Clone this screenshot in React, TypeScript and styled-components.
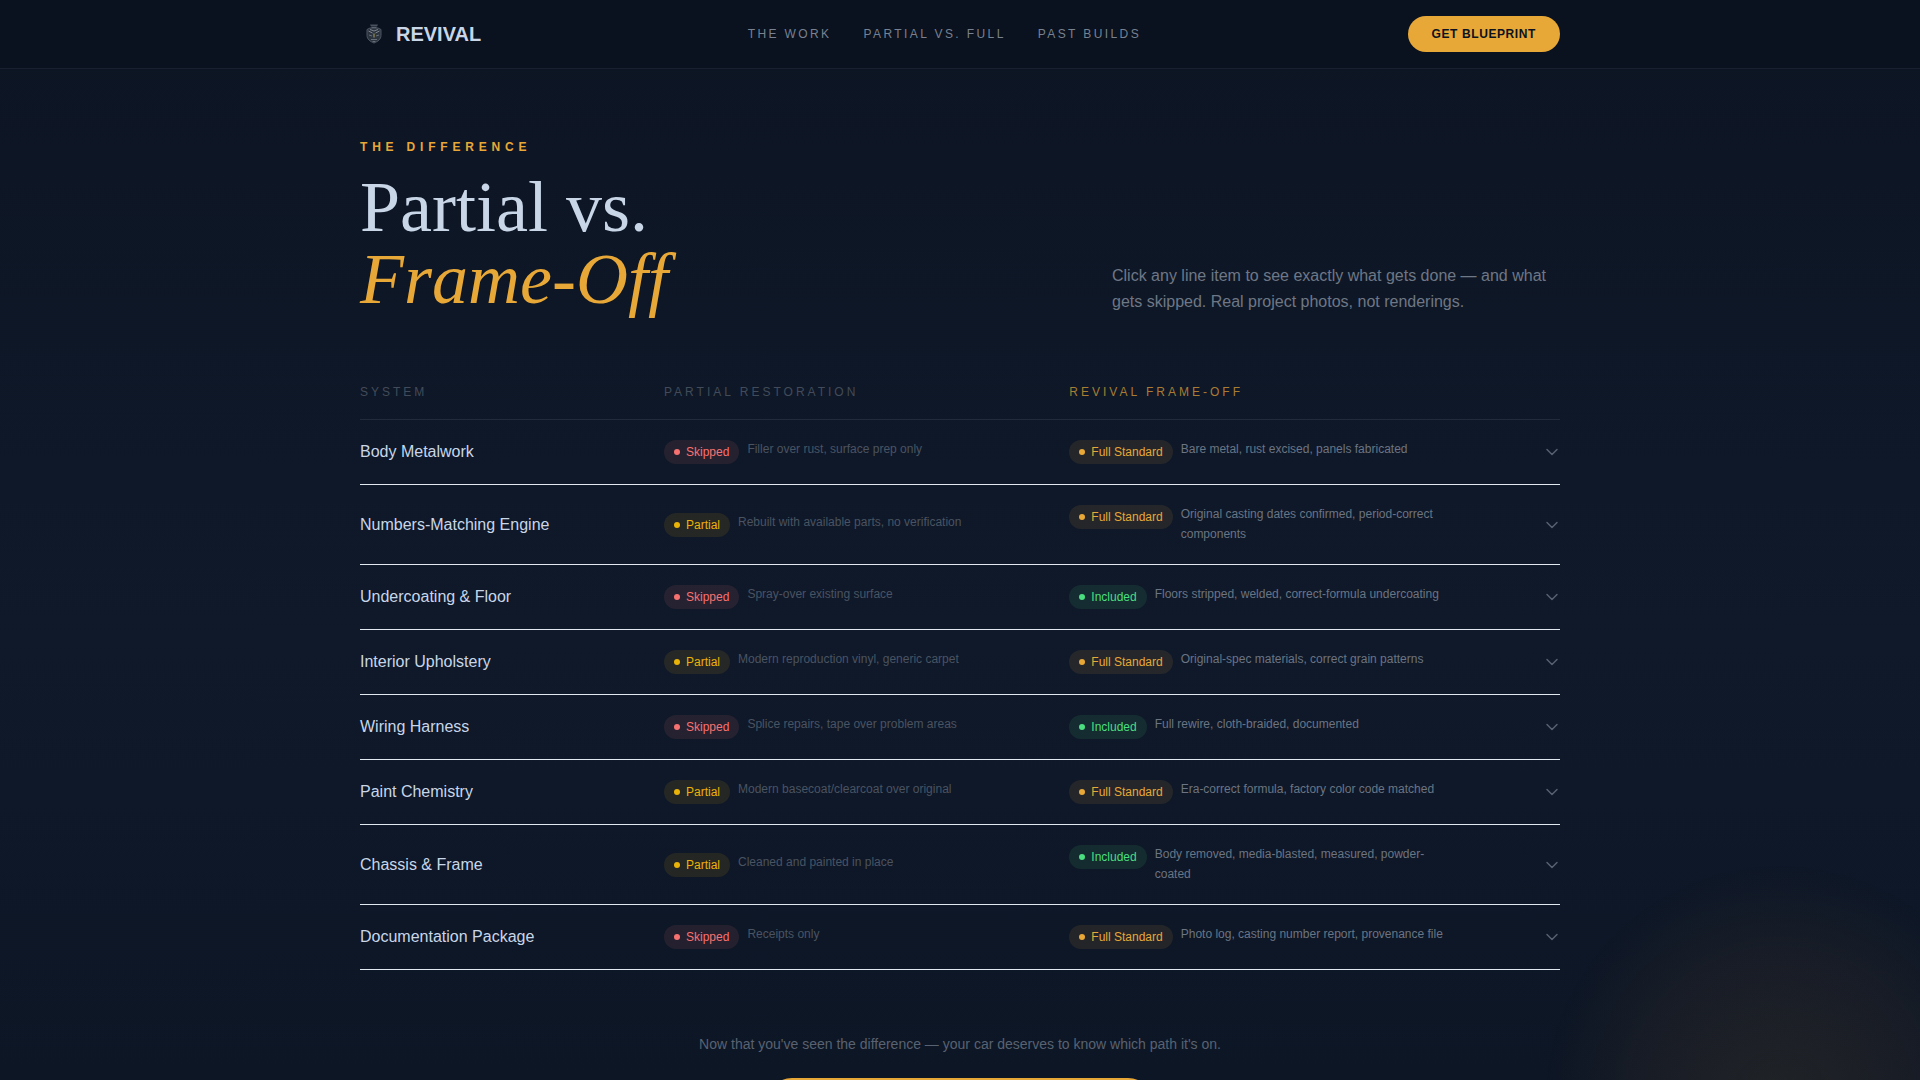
import React, { useState } from "react";
import styled, { createGlobalStyle } from "styled-components";

const sans = `"Liberation Sans", Arial, sans-serif`;
const serif = `"Liberation Serif", "Times New Roman", serif`;
const amber = "#e8a838";
const ice = "#c8d6e8";

const GlobalStyle = createGlobalStyle`
  *, *::before, *::after { box-sizing: border-box; }
  html { background: #0e1726; }
  body {
    margin: 0;
    font-family: ${sans};
    color: ${ice};
    line-height: 1.5;
  }
  h1, h2, p { margin: 0; }
  button { font: inherit; color: inherit; border: 0; background: none; cursor: pointer; }
`;

const Page = styled.div`
  position: relative;
  min-height: 100vh;
  background: linear-gradient(180deg, #0d1523 0, #0f192a 640px, #0d1625 1080px);
`;

const Glow = styled.div`
  position: fixed;
  right: -100px;
  bottom: -260px;
  width: 480px;
  height: 480px;
  border-radius: 50%;
  background: radial-gradient(circle, rgba(232, 168, 56, 0.09), rgba(232, 150, 56, 0.05) 42%, transparent 70%);
  pointer-events: none;
`;

const Container = styled.div`
  width: 100%;
  max-width: 1200px;
  margin: 0 auto;
`;

const TopBar = styled.header`
  background: #0a111f;
  border-bottom: 1px solid #19202f;
`;

const TopBarInner = styled(Container)`
  display: flex;
  align-items: center;
  justify-content: space-between;
  padding: 16px 0;
`;

const Brand = styled.a`
  display: flex;
  align-items: center;
  gap: 8px;
  color: ${ice};
  text-decoration: none;
  font-size: 20px;
  line-height: 28px;
  font-weight: 700;
`;

const Nav = styled.nav`
  display: flex;
  gap: 32px;
`;

const NavLink = styled.a`
  color: #78818f;
  text-decoration: none;
  font-size: 12px;
  line-height: 16px;
  letter-spacing: 0.2em;
  text-transform: uppercase;
`;

const Pill = styled.button<{ $large?: boolean }>`
  padding: ${(p) => (p.$large ? "16px 40px" : "10px 24px")};
  min-width: ${(p) => (p.$large ? "388px" : "0")};
  border-radius: 999px;
  background: ${amber};
  color: #0b1220;
  font-size: ${(p) => (p.$large ? "14px" : "12px")};
  line-height: ${(p) => (p.$large ? "20px" : "16px")};
  font-weight: 700;
  letter-spacing: 0.05em;
  text-transform: uppercase;
`;

const Section = styled(Container).attrs({ as: "main" })`
  padding: 70px 0 96px;
`;

const Intro = styled.div`
  display: flex;
  align-items: flex-end;
  justify-content: space-between;
  margin-bottom: 69px;
`;

const Eyebrow = styled.p`
  color: ${amber};
  font-size: 12px;
  line-height: 16px;
  font-weight: 700;
  letter-spacing: 0.4em;
  text-transform: uppercase;
  margin-bottom: 16px;
`;

const Title = styled.h1`
  font-family: ${serif};
  font-size: 72px;
  line-height: 72px;
  font-weight: 400;
  color: ${ice};

  em {
    display: block;
    color: ${amber};
  }
`;

const Lead = styled.p`
  width: 448px;
  color: #6e7785;
  font-size: 16px;
  line-height: 26px;
`;

const Grid = styled.div`
  display: grid;
  grid-template-columns: repeat(12, minmax(0, 1fr));
  column-gap: 16px;
`;

const HeadRow = styled(Grid)`
  padding-bottom: 19px;
  border-bottom: 1px solid #222b3a;
`;

const Heading = styled.div<{ $span: number; $accent?: boolean }>`
  grid-column: span ${(p) => p.$span};
  color: ${(p) => (p.$accent ? "#a87c33" : "#424b59")};
  font-size: 12px;
  line-height: 16px;
  letter-spacing: 0.25em;
  text-transform: uppercase;
`;

const Item = styled.div`
  border-bottom: 1px solid #e2e8f0;
`;

const RowButton = styled(Grid).attrs({ as: "button", type: "button" })`
  width: 100%;
  align-items: center;
  padding: 20px 0;
  text-align: left;
`;

const Name = styled.span`
  grid-column: span 3;
  font-size: 16px;
  line-height: 24px;
`;

const Cell = styled.span`
  grid-column: span 4;
  display: flex;
  align-items: flex-start;
  gap: 8px;
`;

type Status = "Skipped" | "Partial" | "Full Standard" | "Included";

const tone: Record<Status, { ink: string; fill: string }> = {
  Skipped: { ink: "#f87171", fill: "rgba(248, 113, 113, 0.1)" },
  Partial: { ink: "#eab308", fill: "rgba(234, 179, 8, 0.1)" },
  "Full Standard": { ink: amber, fill: "rgba(232, 168, 56, 0.1)" },
  Included: { ink: "#4ade80", fill: "rgba(74, 222, 128, 0.1)" },
};

const Badge = styled.span<{ $status: Status }>`
  display: inline-flex;
  align-items: center;
  flex-shrink: 0;
  gap: 6px;
  padding: 4px 10px;
  border-radius: 999px;
  font-size: 12px;
  line-height: 16px;
  color: ${(p) => tone[p.$status].ink};
  background: ${(p) => tone[p.$status].fill};

  &::before {
    content: "";
    width: 6px;
    height: 6px;
    border-radius: 50%;
    background: currentColor;
  }
`;

const Note = styled.span<{ $strong?: boolean }>`
  color: ${(p) => (p.$strong ? "#6b7482" : "#4a5361")};
  font-size: 12px;
  line-height: 1.625;
`;

const Toggle = styled.span<{ $open: boolean }>`
  display: flex;
  justify-content: flex-end;
  color: #566070;

  svg {
    transform: rotate(${(p) => (p.$open ? "180deg" : "0deg")});
  }
`;

const Closing = styled.div`
  display: flex;
  flex-direction: column;
  align-items: center;
  gap: 24px;
  padding-top: 64px;
`;

const ClosingText = styled.p`
  color: #596271;
  font-size: 14px;
  line-height: 20px;
`;

interface System {
  name: string;
  partial: [Status, string];
  full: [Status, string];
}

const systems: System[] = [
  { name: "Body Metalwork", partial: ["Skipped", "Filler over rust, surface prep only"], full: ["Full Standard", "Bare metal, rust excised, panels fabricated"] },
  { name: "Numbers-Matching Engine", partial: ["Partial", "Rebuilt with available parts, no verification"], full: ["Full Standard", "Original casting dates confirmed, period-correct components"] },
  { name: "Undercoating & Floor", partial: ["Skipped", "Spray-over existing surface"], full: ["Included", "Floors stripped, welded, correct-formula undercoating"] },
  { name: "Interior Upholstery", partial: ["Partial", "Modern reproduction vinyl, generic carpet"], full: ["Full Standard", "Original-spec materials, correct grain patterns"] },
  { name: "Wiring Harness", partial: ["Skipped", "Splice repairs, tape over problem areas"], full: ["Included", "Full rewire, cloth-braided, documented"] },
  { name: "Paint Chemistry", partial: ["Partial", "Modern basecoat/clearcoat over original"], full: ["Full Standard", "Era-correct formula, factory color code matched"] },
  { name: "Chassis & Frame", partial: ["Partial", "Cleaned and painted in place"], full: ["Included", "Body removed, media-blasted, measured, powder-coated"] },
  { name: "Documentation Package", partial: ["Skipped", "Receipts only"], full: ["Full Standard", "Photo log, casting number report, provenance file"] },
];

const Crest = () => (
  <svg width="28" height="28" viewBox="0 0 28 28" fill="none" aria-hidden="true">
    <path d="M10 4.5h8l-1 2h-6z" fill="#4a525e" />
    <path d="M11.5 7.5h5" stroke="#6a717b" />
    <path d="M7 9.5l3-1.5h8l3 1.5v6c0 3.5-3 6-7 7.5-4-1.5-7-4-7-7.5z" fill="#2b333f" stroke="#4d5663" />
    <path d="M8.5 11l4 2M19.5 11l-4 2M10 9.5l4 1.5 4-1.5" stroke="#7d848d" />
    <path d="M9 15l3 1M19 15l-3 1M11 19.5h6M12.5 21.5h3" stroke="#666e79" />
    <path d="M13 13.5h2v4h-2z" fill="#6d6a4c" />
  </svg>
);

const Chevron = () => (
  <svg width="16" height="16" viewBox="0 0 16 16" fill="none" aria-hidden="true">
    <path d="M3 5.5l5 5 5-5" stroke="currentColor" strokeWidth="1.5" strokeLinecap="round" strokeLinejoin="round" />
  </svg>
);

function SystemRow({ system }: { system: System }) {
  const [open, setOpen] = useState(false);
  return (
    <Item>
      <RowButton aria-expanded={open} onClick={() => setOpen(!open)}>
        <Name>{system.name}</Name>
        <Cell>
          <Badge $status={system.partial[0]}>{system.partial[0]}</Badge>
          <Note>{system.partial[1]}</Note>
        </Cell>
        <Cell>
          <Badge $status={system.full[0]}>{system.full[0]}</Badge>
          <Note $strong>{system.full[1]}</Note>
        </Cell>
        <Toggle $open={open}>
          <Chevron />
        </Toggle>
      </RowButton>
    </Item>
  );
}

export default function App() {
  return (
    <Page>
      <GlobalStyle />
      <TopBar>
        <TopBarInner>
          <Brand href="#">
            <Crest />
            REVIVAL
          </Brand>
          <Nav>
            <NavLink href="#work">The Work</NavLink>
            <NavLink href="#difference">Partial vs. Full</NavLink>
            <NavLink href="#builds">Past Builds</NavLink>
          </Nav>
          <Pill type="button">Get Blueprint</Pill>
        </TopBarInner>
      </TopBar>
      <Section>
        <Intro>
          <div>
            <Eyebrow>The Difference</Eyebrow>
            <Title>
              Partial vs.
              <em>Frame-Off</em>
            </Title>
          </div>
          <Lead>
            Click any line item to see exactly what gets done — and what gets skipped. Real project photos, not
            renderings.
          </Lead>
        </Intro>
        <HeadRow>
          <Heading $span={3}>System</Heading>
          <Heading $span={4}>Partial Restoration</Heading>
          <Heading $span={4} $accent>
            Revival Frame-Off
          </Heading>
        </HeadRow>
        {systems.map((system) => (
          <SystemRow key={system.name} system={system} />
        ))}
        <Closing>
          <ClosingText>Now that you've seen the difference — your car deserves to know which path it's on.</ClosingText>
          <Pill type="button" $large>
            Get Blueprint
          </Pill>
        </Closing>
      </Section>
      <Glow />
    </Page>
  );
}
